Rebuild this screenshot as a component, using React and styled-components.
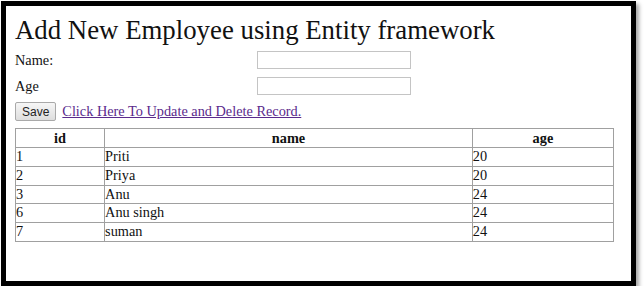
import React from 'react';
import styled, { createGlobalStyle } from 'styled-components';

const GlobalStyle = createGlobalStyle`
  html, body {
    margin: 0;
    padding: 0;
    background: #ffffff;
  }
  body {
    font-family: "Liberation Serif", "Times New Roman", serif;
    color: #111;
  }
`;

const Frame = styled.div`
  box-sizing: border-box;
  margin: 1px 0 0 1px;
  width: 635px;
  height: 285px;
  border: 5px solid #000;
  background: #fff;
  box-shadow: 3px 3px 4px rgba(0, 0, 0, 0.35);
  padding: 8px 9px 0 9px;
`;

const Heading = styled.h1`
  margin: 0;
  font-size: 26.8px;
  font-weight: normal;
  line-height: 32px;
  color: #111;
`;

const FormGrid = styled.div`
  display: grid;
  grid-template-columns: 242px 154px;
  row-gap: 8px;
  align-items: center;
  margin-top: 5px;
`;

const Label = styled.label`
  font-size: 14.3px;
`;

const TextInput = styled.input`
  box-sizing: border-box;
  width: 154px;
  height: 18px;
  border: 1px solid #c4c4c4;
  background: #fff;
  padding: 0 2px;
`;

const Actions = styled.div`
  display: flex;
  align-items: center;
  gap: 6px;
  margin-top: 7px;
`;

const Button = styled.button`
  box-sizing: border-box;
  height: 19px;
  padding: 0 6px;
  font-family: "Liberation Sans", Arial, sans-serif;
  font-size: 12px;
  color: #222;
  background: linear-gradient(#f6f6f6, #dedede);
  border: 1px solid #a9a9a9;
  border-radius: 2px;
`;

const Link = styled.a`
  font-size: 14.3px;
  color: #5a2a8c;
  text-decoration: underline;
`;

const Grid = styled.table`
  margin-top: 7px;
  width: 599px;
  table-layout: fixed;
  border-collapse: collapse;
  font-size: 14.3px;
`;

const Col = styled.col`
  width: ${(p) => p.$w};
`;

const HeadCell = styled.th`
  border: 1px solid #a0a0a0;
  padding: 0;
  height: 18px;
  line-height: 18px;
  font-weight: bold;
  text-align: center;
`;

const Cell = styled.td`
  border: 1px solid #a0a0a0;
  padding: 0;
  height: 17.8px;
  line-height: 17.8px;
  white-space: nowrap;
`;

const rows = [
  { id: 1, name: 'Priti', age: 20 },
  { id: 2, name: 'Priya', age: 20 },
  { id: 3, name: 'Anu', age: 24 },
  { id: 6, name: 'Anu singh', age: 24 },
  { id: 7, name: 'suman', age: 24 },
];

export default function App() {
  return (
    <>
      <GlobalStyle />
      <Frame>
        <Heading>Add New Employee using Entity framework</Heading>
        <FormGrid>
          <Label>Name:</Label>
          <TextInput type="text" />
          <Label>Age</Label>
          <TextInput type="text" />
        </FormGrid>
        <Actions>
          <Button>Save</Button>
          <Link href="#">Click Here To Update and Delete Record.</Link>
        </Actions>
        <Grid>
          <colgroup>
            <Col $w="14.9%" />
            <Col $w="61.5%" />
            <Col $w="23.6%" />
          </colgroup>
          <thead>
            <tr>
              <HeadCell>id</HeadCell>
              <HeadCell>name</HeadCell>
              <HeadCell>age</HeadCell>
            </tr>
          </thead>
          <tbody>
            {rows.map((r) => (
              <tr key={r.id}>
                <Cell>{r.id}</Cell>
                <Cell>{r.name}</Cell>
                <Cell>{r.age}</Cell>
              </tr>
            ))}
          </tbody>
        </Grid>
      </Frame>
    </>
  );
}
